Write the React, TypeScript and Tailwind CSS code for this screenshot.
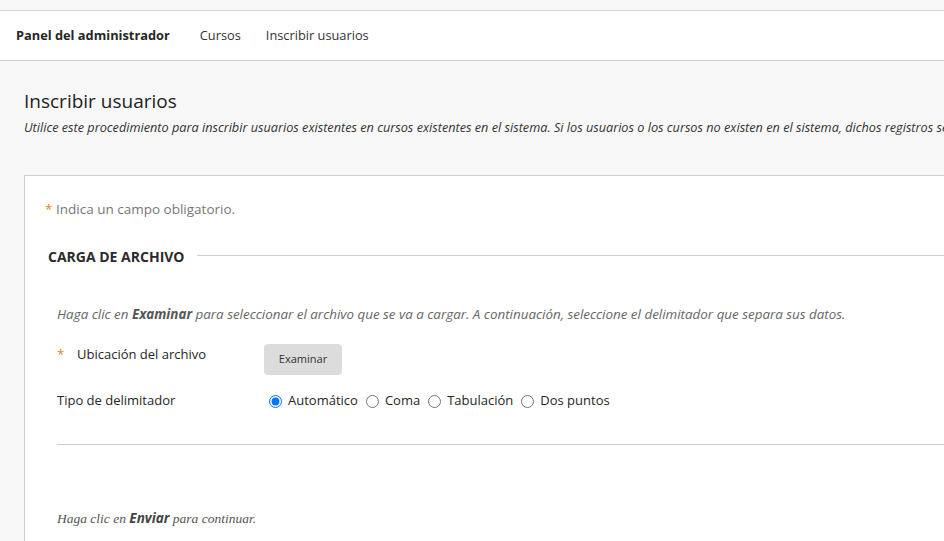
import React from 'react'

const sans = { fontFamily: '"Open Sans", "Liberation Sans", sans-serif' }

function Radio({ label, checked }: { label: string; checked?: boolean }) {
  return (
    <label className="flex items-center">
      <input type="radio" name="delim" defaultChecked={checked} className="ml-[5px] mr-[6px] mt-[3px] h-[13px] w-[13px] accent-[#0075ff]" />
      <span className="mr-[3px]">{label}</span>
    </label>
  )
}

export default function App() {
  return (
    <div className="h-[541px] w-[944px] overflow-hidden bg-[#f8f8f8] text-[#262626]" style={sans}>
      <div className="h-[11px] border-b border-[#d6d6d6] bg-[#f8f8f8]" />
      <nav className="flex h-[50px] items-center border-b border-[#d0d0d0] bg-white pl-4">
        <span className="text-[12.8px] font-bold text-[#262626]">Panel del administrador</span>
        <span className="ml-[30px] text-[12.8px] text-[#333]">Cursos</span>
        <span className="ml-[25px] text-[12.8px] text-[#333]">Inscribir usuarios</span>
      </nav>

      <div className="pl-6 pt-[27px]">
        <h1 className="text-[19px] leading-[26px] text-[#222]">Inscribir usuarios</h1>
        <p className="whitespace-nowrap text-[12.7px] italic leading-[26px] text-[#333]">
          Utilice este procedimiento para inscribir usuarios existentes en cursos existentes en el sistema. Si los usuarios o los cursos no existen en el sistema, dichos registros se omitirán.
        </p>

        <div className="mt-[35px] w-[1200px] border border-[#cdcdcd] bg-white pb-10 pl-5 pt-[24px]">
          <p className="text-[13.5px] leading-[18px] text-[#777]">
            <span className="text-[#f58220]">*</span> Indica un campo obligatorio.
          </p>

          <div className="mt-[29px] flex items-center pl-[3px]">
            <h2 className="text-[14px] font-bold leading-[19px] text-[#2b2b2b]">CARGA DE ARCHIVO</h2>
            <div className="ml-[12px] mt-[-2px] h-px flex-1 bg-[#cdcdcd]" />
          </div>

          <div className="pl-3 pt-[39px]">
            <p className="text-[13.4px] italic leading-[19px] text-[#666]">
              Haga clic en <b className="font-bold text-[#555]">Examinar</b> para seleccionar el archivo que se va a cargar. A continuación, seleccione el delimitador que separa sus datos.
            </p>

            <div className="mt-[20px] flex items-start text-[13px]">
              <div className="flex w-[207px] pt-[1px] leading-[18px]">
                <span className="w-[20px] text-[#f58220]">*</span>
                <span>Ubicación del archivo</span>
              </div>
              <button className="h-[31px] w-[78px] rounded-sm bg-[#dcdcdc] text-[11px] text-[#333]">Examinar</button>
            </div>

            <div className="mt-[16px] flex items-center text-[13px] leading-[18px]">
              <span className="w-[207px]">Tipo de delimitador</span>
              <Radio label="Automático" checked />
              <Radio label="Coma" />
              <Radio label="Tabulación" />
              <Radio label="Dos puntos" />
            </div>

            <div className="mt-[35px] h-px bg-[#cdcdcd]" />

            <p className="mt-[63px] text-[13.5px] italic text-[#555]" style={{ fontFamily: '"Liberation Serif", serif' }}>
              Haga clic en <b className="font-bold text-[#444]" style={sans}>Enviar</b> para continuar.
            </p>
          </div>
        </div>
      </div>
    </div>
  )
}
